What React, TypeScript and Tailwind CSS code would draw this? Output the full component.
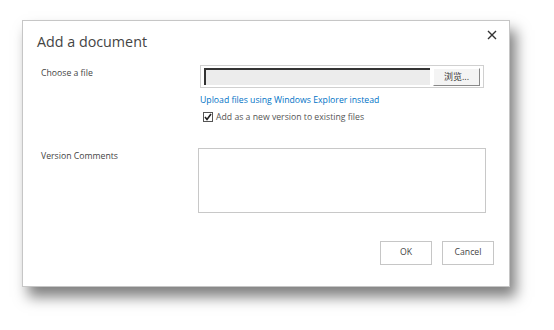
export default function App() {
  return (
    <div
      className="w-[554px] h-[330px] bg-white pt-[20px] pl-[22px]"
      style={{ fontFamily: '"Open Sans", "Noto Sans", "Noto Sans CJK SC", sans-serif' }}
    >
      <div className="relative w-[488px] h-[267px] bg-white border border-[#c6c6c6] shadow-[6px_10px_13px_rgba(0,0,0,0.5)]">
        {/* close */}
        <button className="absolute right-[12px] top-[9px] text-[#444]">
          <svg width="10" height="10" viewBox="0 0 10 10">
            <path d="M1 1 L9 9 M9 1 L1 9" stroke="#333" strokeWidth="1.4" />
          </svg>
        </button>

        <h1 className="pl-[14px] pt-[10px] text-[14.3px] leading-[22px] text-[#444]">
          Add a document
        </h1>

        <div className="flex mt-[12px]">
          <div className="w-[177px] pl-[18px] pt-[2px] text-[8.7px] text-[#444]">Choose a file</div>
          <div className="flex flex-col">
            <div className="w-[284px] h-[23px] border border-[#d0d0d0] flex items-center px-[3px] gap-[3px]">
              <div className="flex-1 h-[17px] bg-[#ececec] border-t-[2px] border-l-[2px] border-[#333]" />
              <div className="w-[47px] h-[18px] bg-[#f4f4f4] border border-[#888] border-t-[#fff] border-l-[#fff] text-[9px] text-[#333] flex items-center justify-center">
                浏览...
              </div>
            </div>
            <a className="mt-[5px] text-[8.7px] text-[#0072c6] leading-[14px]">
              Upload files using Windows Explorer instead
            </a>
            <label className="mt-[3px] ml-[3px] flex items-center gap-[3px] text-[8.7px] text-[#555] leading-[14px]">
              <span className="w-[10px] h-[10px] border border-[#555] bg-white flex items-center justify-center">
                <svg width="8" height="8" viewBox="0 0 8 8">
                  <path d="M1 4 L3 6.5 L7 1" stroke="#222" strokeWidth="1.6" fill="none" />
                </svg>
              </span>
              Add as a new version to existing files
            </label>
          </div>
        </div>

        <div className="flex mt-[24px]">
          <div className="w-[175px] pl-[18px] pt-[2px] text-[8.7px] text-[#444]">Version Comments</div>
          <div className="w-[288px] h-[65px] border border-[#c8c8c8]" />
        </div>

        <div className="flex justify-end gap-[10px] pr-[15px] mt-[28px]">
          <button className="w-[52px] h-[24px] border border-[#c6c6c6] bg-white text-[8.7px] text-[#444]">OK</button>
          <button className="w-[52px] h-[24px] border border-[#c6c6c6] bg-white text-[8.7px] text-[#444]">Cancel</button>
        </div>
      </div>
    </div>
  );
}
